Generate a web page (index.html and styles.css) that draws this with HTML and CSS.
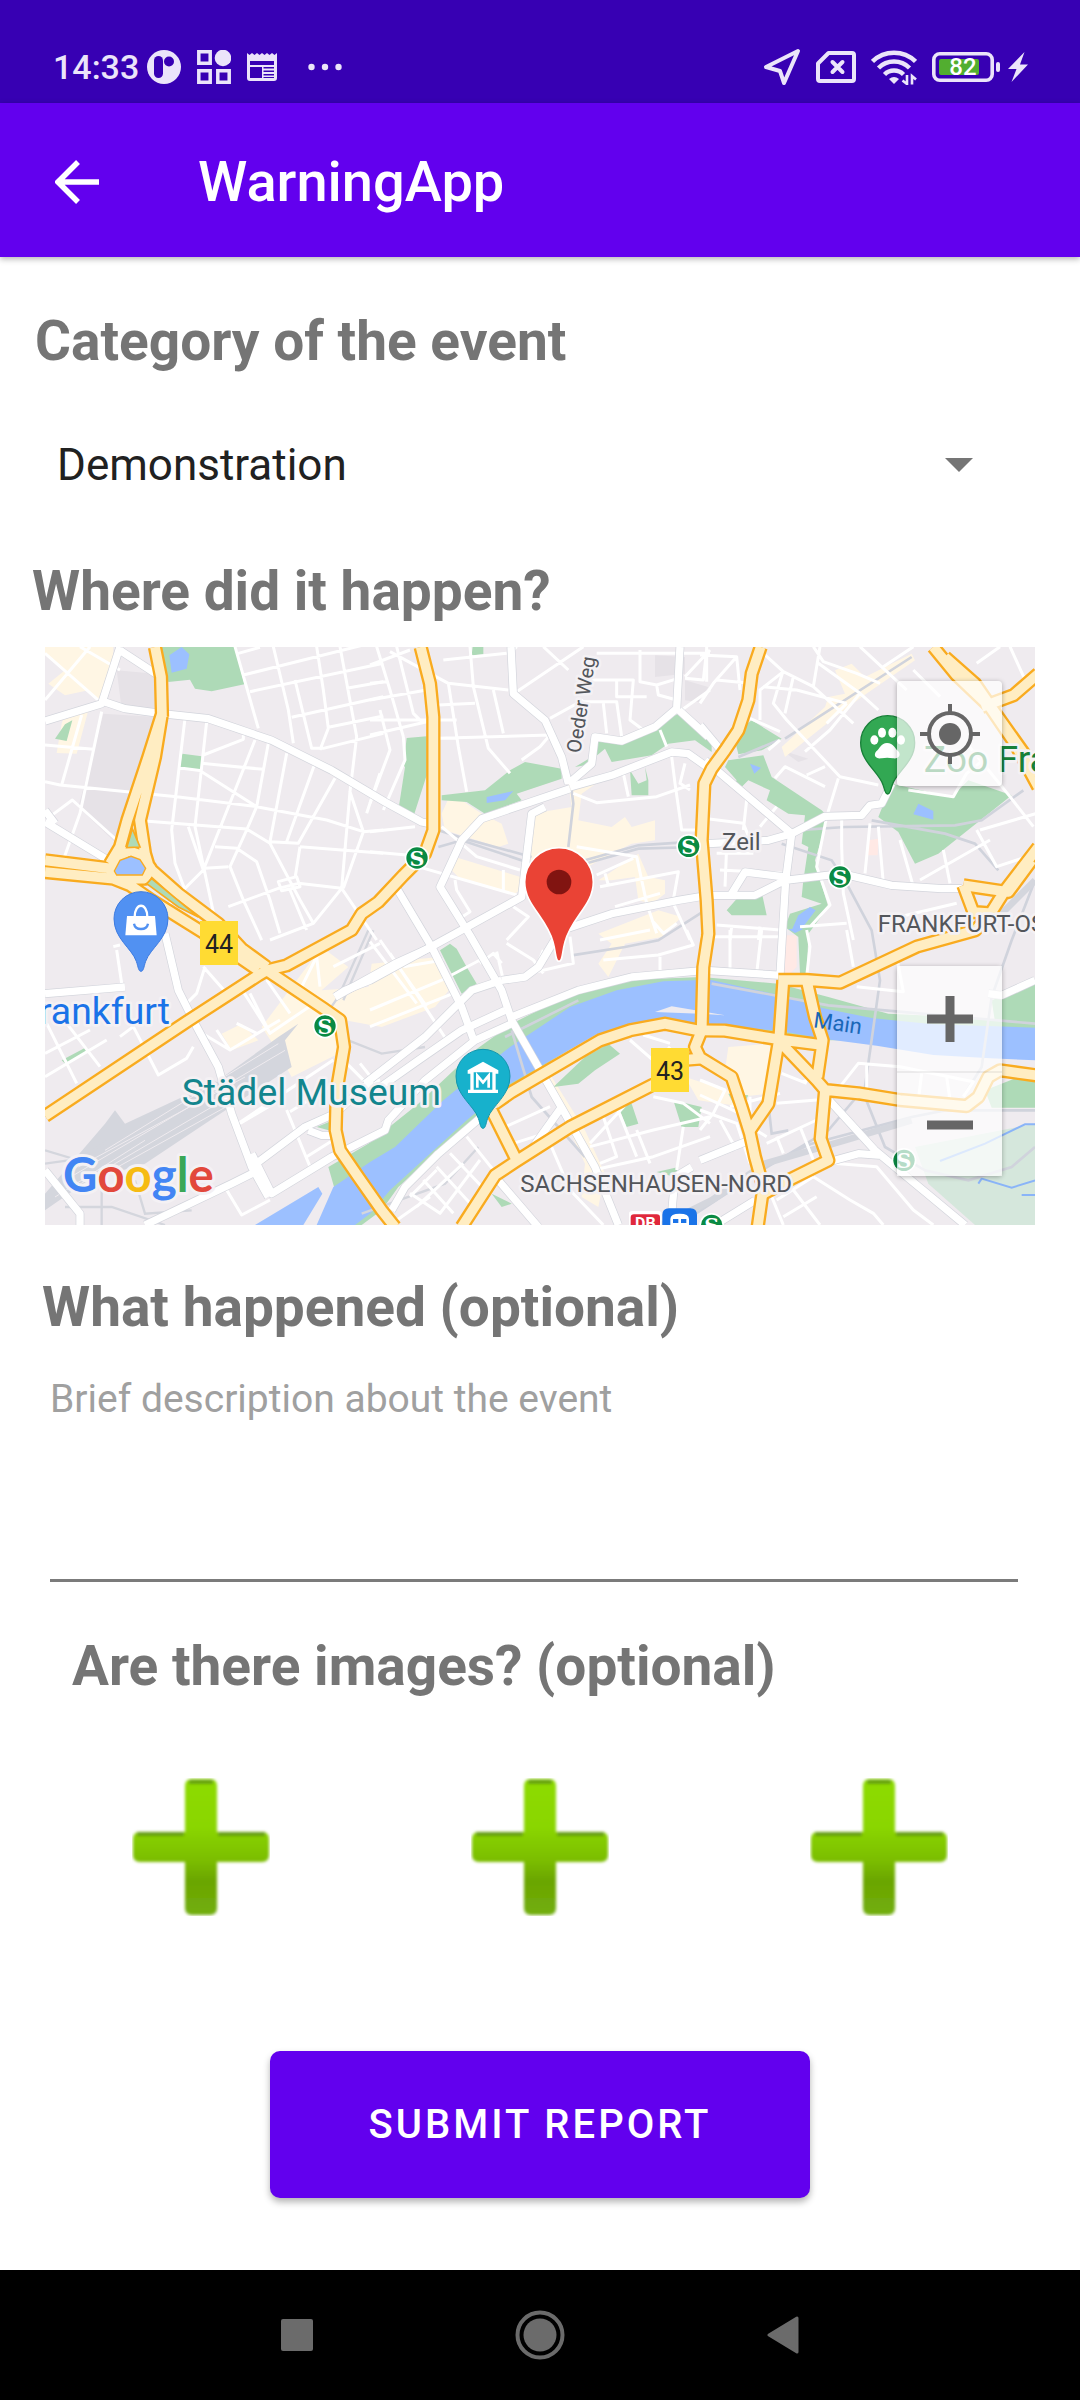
FILE: index.html
```html
<!DOCTYPE html>
<html lang="en">
<head>
<meta charset="utf-8">
<meta name="viewport" content="width=device-width, initial-scale=1">
<title>WarningApp</title>
<link rel="stylesheet" href="styles.css">
</head>
<body>
<div class="status-bar">
  <div class="status-group">
    <span class="clock">14:33</span>
    <svg class="ic-app" width="34" height="34" viewBox="0 0 34 34"><circle cx="17" cy="17" r="17" fill="#ebe4fa"/><rect x="7" y="6" width="9" height="22" rx="4.500" fill="#3700b3"/><circle cx="22" cy="11.500" r="5" fill="#3700b3"/></svg>
    <svg width="34" height="34" viewBox="0 0 34 34"><g fill="none" stroke="#ebe4fa" stroke-width="3.500"><path d="M1.800 1.800h11.400v11.400H1.800zM1.800 20.800h11.400v11.400H1.800zM20.800 20.800h11.400v11.400H20.800z"/></g><circle cx="26" cy="8" r="8.300" fill="#ebe4fa"/></svg>
    <svg width="30" height="28" viewBox="0 0 30 28"><path fill="#ebe4fa" fill-rule="evenodd" d="M0 0l2.500 2L5 0l2.500 2L10 0l2.500 2L15 0l2.500 2L20 0l2.500 2L25 0l2.500 2L30 0v25a3 3 0 0 1-3 3H3a3 3 0 0 1-3-3zM3 8v4h24V8zM3 14v11h12V14zM16.500 14v1.500H27V14zm0 3.500V19H27v-1.500zm0 3.500v1.500H27V21zm0 3v1H27v-1z"/></svg>
    <svg class="ic-more" width="34" height="8" viewBox="0 0 34 8"><g fill="#ebe4fa"><circle cx="3.500" cy="4" r="3.200"/><circle cx="17" cy="4" r="3.200"/><circle cx="30.500" cy="4" r="3.200"/></g></svg>
  </div>
  <div class="status-group status-right">
    <svg width="38" height="38" viewBox="0 0 38 38"><path d="M35 3L3 19l14 4 4 12z" fill="none" stroke="#ebe4fa" stroke-width="4" stroke-linejoin="round"/></svg>
    <svg width="40" height="32" viewBox="0 0 40 32"><path d="M12.500 2H36a2 2 0 0 1 2 2v24a2 2 0 0 1-2 2H4a2 2 0 0 1-2-2V12.500z" fill="none" stroke="#ebe4fa" stroke-width="4" stroke-linejoin="round"/><path d="M16.500 11l10 10m0-10l-10 10" stroke="#ebe4fa" stroke-width="4" stroke-linecap="round"/></svg>
    <svg width="46" height="36" viewBox="0 0 46 36"><g fill="none" stroke="#ebe4fa" stroke-width="4.500"><path d="M1.500 12.500a31 31 0 0 1 43 0"/><path d="M7.500 19a22 22 0 0 1 31 0"/><path d="M13.500 25.500a13.500 13.500 0 0 1 19 0"/></g><path d="M18 30q5-4 10 0l-5 5z" fill="#ebe4fa"/><path d="M36 26v9l-4.500-3.500M41 35.500V27l4 3.500" fill="none" stroke="#ebe4fa" stroke-width="2.600"/></svg>
    <svg width="68" height="30" viewBox="0 0 68 30"><rect x="1.800" y="1.800" width="58.400" height="26.400" rx="6" fill="none" stroke="#ebe4fa" stroke-width="3.600"/><rect x="7" y="7" width="40" height="16" rx="2" fill="#52ae30"/><rect x="64" y="10" width="4" height="10" rx="2" fill="#ebe4fa"/><text x="31" y="23" class="battery-text">82</text></svg>
    <svg class="ic-bolt" width="20" height="30" viewBox="0 0 20 30"><path d="M16.500 0L0 17h8.500L3.500 30 20 12.500h-8z" fill="#ebe4fa"/></svg>
  </div>
</div>

<header class="app-bar">
  <button class="back" type="button" aria-label="Back"><svg width="44" height="44" viewBox="0 0 44 44"><path d="M44 22H4M23 2L3 22l20 20" fill="none" stroke="#fff" stroke-width="5.500"/></svg></button>
  <h1>WarningApp</h1>
</header>

<main>
  <form class="report">
    <label class="heading heading-category" for="category">Category of the event</label>
    <div class="spinner">
      <select id="category"><option>Demonstration</option></select>
      <svg class="caret" width="28" height="14" viewBox="0 0 28 14"><path d="M0 0h28L14 14z" fill="#757575"/></svg>
    </div>

    <h2 class="heading">Where did it happen?</h2>
    <div class="map">
      <svg class="map-canvas" viewBox="0 0 2970 1734" preserveAspectRatio="xMidYMid slice" role="img" aria-label="Map of Frankfurt">
        <defs>
          <g id="streets">
            <g transform="translate(-15 -21)">
              <path d="M15 40L180 185M15 180L150 20M120 20L240 90M185 215L120 520L70 660M125 225L65 435M15 315L160 328M15 425L60 435L410 470L650 500L860 540L970 575L1030 570M30 530L97 480L230 600M435 235L395 570L405 670L435 750M500 245L465 560L495 700L525 840M490 345L610 298V285M485 370L670 388M485 395L650 500L620 570L570 680L610 780L665 900M415 383L485 392M315 543L620 567L690 610L780 780L820 850M645 300L490 690L390 790M685 310L650 500M740 340L690 605L775 610L885 415M825 370L740 605M930 455L905 745L820 850L690 900M780 620L1030 640M525 620L590 625L650 665L690 780L720 880M495 685L565 680M445 560L490 690M565 800L715 745L775 730L905 745L1010 900M715 725L770 710L780 740L725 752ZM780 620L765 715M750 750L800 870M585 20L655 265M595 40L660 22M610 105L1030 0M630 155L1030 70M700 20L745 210L760 310M765 120L815 325H850L1030 280M755 232L1030 170M830 20L850 150L865 265L840 330M865 262L1030 228M900 20L950 290L930 455L970 575L910 745M920 145L1030 125M1020 400L980 520"/>
            </g>
            <g transform="translate(975 -21)">
              <path d="M0 75L120 30M0 130L50 125M0 240L260 240M0 180L170 150M0 285L170 245M20 20L60 150L100 290M80 20L130 220L160 250M30 210L60 330L0 490M100 290L105 360L40 510M60 35L235 130L415 150M220 60L410 40M300 20L310 140L355 325L420 400M235 130L265 320L290 455M205 195L315 190M205 295L540 285L510 320L455 360M370 150L400 280M420 40L440 20M440 155L640 20M520 20L595 90M540 235L640 180M640 120L790 120L780 240L820 270M740 120V170H830M640 185H740L755 290M700 190L710 280M680 40L1020 40M810 30V125L860 135L925 115M860 135L865 165L920 180M945 115L1000 120L1010 30M945 110L1020 30M870 270L890 320M935 210L1020 150M760 400L775 470M610 460L680 488L860 470L960 435M905 350L915 430L935 570H980M945 370L930 430L960 450M0 575L135 560M0 635L110 645M110 670L440 765M215 560L320 650L450 690M400 690V750M255 720L260 750L300 815L270 835M430 800L475 830L410 900M620 620L800 650L830 790L860 880M680 705L790 655M690 740L925 695L910 780M735 800L870 760M705 700L715 735M910 790L960 900M845 840L880 880L920 850"/>
            </g>
            <g transform="translate(1965 -21)">
              <path d="M0 45L110 50L40 130L0 190M20 20V125M50 120L150 130M110 50L120 150M190 40L250 95L340 140L360 20M250 95L180 150V240M150 235L240 275M250 90L220 190L260 240L420 410L535 435M190 140L290 150L440 190M280 110L255 220M340 140L460 250M355 70L480 160L535 210M340 20L370 65L470 100L540 130M480 20L550 85L620 150M550 80L640 20M480 160L390 270L315 335M440 190L380 250M205 330L240 300M225 415L255 380L375 440M320 405L375 380M415 415L380 530L350 680L390 795L330 860M230 500L180 560M140 480L130 570M10 535L130 550L150 600M50 640L160 640M60 690L250 700M80 620L75 740M425 540V620L430 760L460 900M510 550L495 700M535 560L550 730M600 600L640 740M625 450L760 470L800 400L850 360M840 570L1010 520M830 570L890 680L1010 640M730 630L750 730M660 720L870 600M300 860L440 850M95 860L90 900M180 860L175 900M50 855L240 870M640 90L720 170M830 70L900 20M930 20L980 130M800 310L930 470L1000 560M0 890L90 890L240 890M600 830L770 790"/>
            </g>
            <g transform="translate(-15 849)">
              <path d="M15 440L200 330M15 370L150 300M20 280L110 460M80 280L180 410M230 60L245 160M220 50L240 45M490 110L560 190M495 110L470 190L430 230M470 300L570 360L720 270M530 300L570 360M240 320L280 290L355 435L440 385L460 350M590 280L650 310M630 190L690 310L830 215M680 150L750 250M600 170L690 310M830 80L840 170M780 180L830 80L900 20M1020 40L880 110M580 590L880 390M600 580L720 510M740 540L810 710M750 545L870 470M800 680L880 630M560 780L605 855L690 810M900 380L980 460L1020 450M960 400L1000 450"/>
            </g>
            <g transform="translate(975 849)">
              <path d="M0 35L140 220M30 30L170 230M60 70L230 330M0 240L240 140M0 290L250 190M100 110L220 90M245 135L330 90M380 65L400 150M410 40L490 90L520 130M500 125L610 100L600 20M395 100L370 70L330 100M520 60L500 110M690 30L840 0M700 90L865 75M865 75L970 45L950 0M870 80V120M120 790L210 850L330 690M140 830L280 700M160 750L250 850M200 710L300 820M240 670L345 780M290 620L370 720M180 800L60 885M385 600L540 530M430 640L590 590M540 640L600 780L700 885M660 640L780 510L850 440M660 650L850 600L1020 560M700 560L740 680L690 700M740 530L800 680M670 720L850 680L1020 620M850 500L940 520L1020 580M940 590L920 720M800 600L840 700M780 330L860 400L900 350M820 315L900 340M120 800L200 720"/>
            </g>
            <g transform="translate(1965 849)">
              <path d="M90 0V130M185 0L170 130M440 0L460 110M470 170L610 185L590 80M320 0L330 50L320 140M0 450L75 480L40 550L0 600M0 495L140 560M90 530L240 490M0 540L110 580L150 700M60 570L110 660M230 520L350 510M245 430L320 460M310 455L350 440M420 470L475 400L600 410L820 455L790 500M500 400V480M665 430L655 510M740 440L750 510M350 570L200 640M300 590L340 690M230 620L250 670M340 740L450 810L520 850L550 885M400 700L530 710L640 840L700 885M215 800L250 885M230 810L340 740M280 780L360 885M250 860L350 800M150 500V590L200 620"/>
            </g>
          </g>
          <g id="avenues">
            <path d="M0 222L170 170L215 30L225 0M180 165L240 185L350 200L490 215L680 280L860 370L1020 465L1130 525L1155 530"/>
            <path d="M225 10L340 85M0 525L190 640M0 490L30 530"/>
            <path d="M1398 0L1405 140L1500 220L1550 330L1570 410M1570 410L1640 350L1650 270L1730 282L1830 240L1895 185L1905 0"/>
            <path d="M1575 420L1700 385L1880 315L1930 320L2000 370M1575 425L1310 515L1250 580L1185 720L1275 865L1370 1030L1400 1120L1560 1400L1650 1560L1720 1734"/>
            <path d="M1500 480L1460 500L1430 750L1230 860L975 1000L900 1030L870 1050"/>
            <path d="M1902 190L1990 270M1965 235L2040 325M1980 340L2110 450L2240 560L2340 508L2450 505L2475 475L2510 470L2540 410"/>
            <path d="M1550 850L1700 800L1900 760L1990 745L2130 745L2220 700L2390 680L2540 715L2690 725H2750M2240 560L2222 700L2205 985M2220 690L2100 675L2060 740M2240 560L2170 580L1990 590"/>
            <path d="M1050 715L1160 900L1250 1080L1290 1190M1160 900L1050 950L870 1050"/>
            <path d="M1370 1000L1440 990L1480 960L1540 860M1370 1000L1280 1030L1140 1170L960 1310M1380 1090L1250 1150L1120 1240L950 1360M1400 1130L1290 1180L1140 1300L1030 1420L1020 1450L860 1530L680 1640L620 1520M1400 1110L1600 1030L1760 990L1980 970L2210 985"/>
            <path d="M0 1040L240 1020M360 860L400 1030L450 1130L520 1260L560 1400L620 1560L670 1650M620 1560L780 1440L870 1400L980 1300M790 1450L830 1465H870M620 1580L560 1610L300 1734M0 1570L105 1700V1734M1320 1400L1180 1520L1080 1620L1040 1690M1450 1520L1550 1380M1360 1600L1480 1740M1940 1560L1890 1590L1880 1700"/>
            <path d="M1965 1540L2100 1485M2330 1335L2490 1510L2760 1734M2350 1545L2440 1520L2510 1525M2830 1040L2870 1045L2970 1000M2000 1740L2130 1660"/>
          </g>
          <g id="highways">
            <path d="M330 0L348 90L351 210M351 200L310 330L247 520L225 600L195 650M351 200L330 330L285 520L300 620L315 670M200 675L210 635L250 612L290 625L318 665L298 695L205 695ZM0 640L200 665M0 675L205 695L255 715L320 760L480 860L640 970M310 660L400 740L520 830L590 905L665 960"/>
            <path d="M0 1407L425 1124L640 985L665 970L725 955L920 849L950 800L1000 765L1075 685L1140 620L1165 550V450V210L1155 110L1127 0M665 970L835 1084L885 1119L897 1200L875 1330L872 1450L885 1510L940 1590L1010 1690L1050 1740"/>
            <path d="M2147 0L2120 80L2110 160L2080 250L2040 310L2000 365L1978 410L1970 580L1985 760L1990 860L1975 960L1970 1150L1950 1200L1965 1232L2060 1290L2090 1380L2115 1460L2130 1530L2155 1620L2138 1740"/>
            <path d="M1970 1150L2040 1151L2200 1177L2330 1194M2202 1185L2215 1000M2200 999L2285 999L2385 1007L2615 899L2790 850L2830 810L2880 730L2980 600M2285 1000L2310 1110L2333 1180L2317 1290M2205 1185L2315 1300L2340 1329L2440 1339L2565 1359L2765 1377L2800 1350L2830 1290L2865 1270L2980 1286M2340 1330L2327 1475L2350 1540L2240 1595L2155 1640M2200 1190L2170 1370L2115 1450M2755 715L2890 735L2960 640M2755 715L2785 795L2850 800"/>
            <path d="M1350 1370L1400 1335L1665 1180L1755 1150L1860 1130L1965 1151M1340 1390L1410 1530M1250 1740L1350 1585L1410 1545L1575 1440L1830 1310L1900 1240L1965 1235"/>
            <path d="M2665 0L2735 85L2835 180L2910 290L2980 420M2700 30L2790 110L2845 190L2980 380M2810 180L2905 145L2980 80"/>
          </g>
          <g id="station"><circle r="37" fill="#fff"/><circle r="32" fill="#0a8a43"/><text y="23" class="station-s">S</text></g>
        </defs>

        <rect width="2970" height="1734" fill="#efebef"/>
        <!-- grey blocks -->
        <path fill="#e6e2e7" d="M215 70L330 80L335 200L230 185ZM175 200L335 210L240 580L215 590L100 480Z M1830 25L1920 30V80L1830 90ZM1920 100L1990 120L1960 165L1920 160ZM2210 310L2290 335L2260 345Z"/>
        <!-- commercial areas -->
        <path fill="#fff6e4" d="M0 0H205V70L160 160L130 130L60 145L10 110L60 70L0 20ZM60 200L130 190L95 320L35 318L50 230ZM1210 455L1250 460L1310 500L1370 530L1390 590L1360 600L1200 550L1190 500ZM1230 630L1460 700L1410 740L1240 690L1210 660ZM1490 495L1580 480L1570 410L1660 405L1610 440L1600 520L1700 540L1740 510L1760 540L1830 520V580L1760 590L1700 620L1590 680L1450 640L1460 510ZM1660 700L1780 620L1810 690L1860 700V740L1820 770L1780 760L1770 690L1700 700ZM1660 860L1840 790L1910 810L1850 870L1740 890L1690 990L1660 950L1700 890ZM650 1140L830 900L910 960L830 1030L970 1020L980 950L1180 930L1220 1020L1170 1080L1010 1140L900 1120L880 1220L740 1290L690 1200ZM530 1160L590 1130L640 1180L560 1210ZM2370 70L2420 50L2460 90L2600 20L2610 40L2450 150L2370 210L2220 330L2210 300L2340 180L2350 150L2400 140ZM2050 1200L2180 1190L2170 1340L2080 1350L2040 1270ZM1920 1290L2080 1340L2100 1380L1960 1360ZM1470 1270L1520 1290L1620 1450L1680 1580L1660 1680L1610 1650L1620 1550L1560 1420Z"/>
        <path fill="#ffe9e5" d="M2470 580L2500 575L2498 625L2465 625ZM2220 865H2255V960L2215 1000Z"/>
        <!-- parks -->
        <path fill="#aedab7" d="M345 0H570L598 112L500 133L450 125L435 98L370 105ZM30 275L60 232L82 220L65 282ZM412 320L470 328L468 368L404 362ZM1283 0H1315V22L1280 25ZM1085 273L1145 268V385L1105 510L1060 490L1080 360L1075 355ZM1190 445L1320 430L1395 370L1440 345L1550 365V395L1415 440L1430 460L1320 500L1265 465L1190 460ZM1590 360L1640 330L1650 270L1730 285L1900 200L1950 220L2000 290V315L1950 280L1870 290L1820 325L1700 345L1680 305L1650 330L1645 350ZM1755 370L1780 410L1805 400L1800 360L1810 400V445H1760Z"/>
        <path fill="#aedab7" d="M2065 260L2120 220L2210 275L2150 310L2080 322ZM2050 340L2155 325L2180 390L2330 490L2350 510L2310 640L2320 680L2350 780L2290 860L2285 1000L2265 980L2260 870L2220 840L2235 800L2330 770L2270 750L2275 700L2290 600L2270 590L2280 505L2230 500L2165 460L2175 430L2110 400L2080 430L2060 420L2075 400L2040 360ZM2540 410L2720 450L2770 400L2900 445L2680 620L2610 650L2560 555L2500 510ZM2045 790L2080 750L2150 735L2165 805H2060ZM2840 1060L2970 1010V1140L2850 1125ZM2820 1330L2970 1270V1382H2840Z"/>
        <path fill="#aedab7" d="M1185 910L1215 890L1235 905L1265 960L1295 1010L1250 1040ZM50 1240L125 1200L130 1210L65 1255ZM815 1440L865 1420L870 1455ZM1720 1380L1760 1370L1780 1430L1745 1440ZM1885 1360L1970 1380L1960 1440L1910 1440ZM1835 1575L1900 1560L1890 1590ZM1340 1640L1400 1670L1370 1680ZM2050 1340L2110 1345L2080 1400ZM1525 1320L1620 1230L1690 1190L1725 1220L1650 1270L1600 1310Z"/>
        <path fill="#d5e7dc" d="M2610 1500L2970 1430V1734H2790L2650 1610Z"/>
        <path fill="#aedab7" d="M850 1560L970 1490L1120 1370L1290 1210L1400 1130L1580 1040L1720 1000L1970 990L2200 1010L2350 1050L2530 1100L2740 1110L2970 1130V1180L2300 1180L1965 1140L1850 1110L1650 1160L1390 1320L1060 1620L1010 1690L950 1734H900Z"/>
        <!-- river and ponds -->
        <path fill="#9cc0ff" d="M630 1734L820 1620L832 1640L775 1734ZM815 1734L865 1620L975 1545L1050 1500L1195 1360L1280 1290L1395 1200L1575 1080L1715 1030L1855 1003L1995 998L2205 1045L2335 1084L2485 1114L2665 1132L2970 1142V1240L2835 1234L2665 1224L2495 1196L2335 1175L2195 1150L1965 1135L1860 1116L1755 1138L1655 1162L1395 1310L1265 1420L1035 1630L975 1700L930 1734Z"/>
        <path fill="#eeebf0" d="M1830 1095L1880 1078L2040 1105L1965 1100Z"/>
        <path fill="#9cc0ff" d="M373 25L410 0L433 22L425 65L380 77ZM210 660L260 632L290 665L285 678ZM1325 450L1405 432L1380 460L1325 468ZM2115 350L2148 362L2128 380ZM2620 470L2665 492V518L2605 502ZM2240 850L2260 805L2295 780L2312 790L2270 845ZM2230 846H2275L2250 858Z"/>
        <path fill="none" stroke="#8ab4f8" stroke-width="6" d="M2685 1542L2820 1490L2940 1432H2970M2800 1610L2810 1595L2900 1622L2970 1600M2930 1644H2970"/>

        <!-- railways -->
        <path fill="#d4d6dd" d="M0 1640L180 1430L210 1390L240 1430L520 1300L700 1170L760 1130L720 1180L740 1260L480 1430L300 1550L130 1600L0 1690Z"/>
        <path fill="none" stroke="#efebef" stroke-width="3" d="M60 1600L720 1210M90 1620L620 1310M180 1510L700 1190M100 1560L600 1290M200 1570L560 1370M30 1650L300 1480"/>
        <path fill="none" stroke="#d4d6dd" stroke-width="7" d="M0 1510L100 1540L190 1480M0 1550L70 1540M60 1680L200 1680L360 1734M170 1600V1734M270 1600L300 1700L440 1690M970 850L880 1050L830 1120M985 850L895 1060M910 1180L1010 1220L1140 1200M950 1700L1200 1610L1300 1500"/>
        <path fill="none" stroke="#d0d3dc" stroke-width="8" d="M1180 550L1260 575L1460 630M1180 600L1250 580L1460 650M1620 640L1780 595L1960 583M1620 650L1780 605L1960 600M1580 430L1585 470L1570 600M1580 925L1740 900L1840 880L1980 790M1400 1150L1460 1350L1620 1530M1380 1170L1600 1060M2000 1010L2350 1075L2970 1130M2220 275L2600 30M2210 590L2360 640L2400 700L2480 850L2505 1000L2460 1320L2350 1450L2150 1570L1900 1734M2250 550L2400 540L2730 535L2810 520L2935 430M2480 520L2700 560L2790 590L2860 670M2080 330L2200 280M2460 1350L2520 1500L2640 1570L2770 1600L2900 1560L2970 1500M2970 700L2900 880L2840 1050L2810 1260L2760 1340M2150 1560L2300 1490L2600 1410L2700 1390L2970 1390M2170 1370L2180 1460L2230 1450"/>
        <path fill="none" stroke="#d4d6dd" stroke-width="20" d="M1850 1734L2000 1660L2160 1550L2400 1480L2600 1420M2870 800L2970 700"/>

        <use href="#streets" class="street"/>
        <use href="#avenues" class="avenue-edge"/>
        <use href="#avenues" class="avenue"/>
        <use href="#highways" class="highway-edge"/>
        <use href="#highways" class="highway"/>
        <path fill="#9cc0ff" stroke="#f9ab1f" stroke-width="4" d="M208 672L225 640L258 628L285 638L302 664L292 684H215Z"/>
        <path fill="#aedab7" stroke="#f9ab1f" stroke-width="5" d="M262 545L285 600L245 602ZM320 695L460 810L400 780L305 710Z"/>

        <!-- route shields -->
        <path fill="#ffdb33" d="M465 822H579V954H465ZM1818 1203H1932V1335H1818Z"/>
        <text x="522" y="917" class="shield">44</text>
        <text x="1875" y="1298" class="shield">43</text>

        <!-- stations -->
        <use href="#station" x="1116" y="633"/>
        <use href="#station" x="1931" y="598"/>
        <use href="#station" x="2385" y="690"/>
        <use href="#station" x="840" y="1137"/>
        <use href="#station" x="2577" y="1540"/>
        <use href="#station" x="2000" y="1735"/>
        <path fill="#fff" d="M1752 1700Q1752 1692 1762 1692H1840Q1850 1692 1850 1700V1734H1752Z"/>
        <path fill="#e0283c" d="M1757 1712Q1757 1702 1767 1702H1835Q1845 1702 1845 1712V1734H1757Z"/>
        <text x="1801" y="1746" class="db">DB</text>
        <path fill="#1a73e8" d="M1852 1704Q1852 1684 1872 1684H1936Q1956 1684 1956 1704V1734H1852Z"/>
        <path fill="#fff" fill-rule="evenodd" d="M1876 1734V1716Q1876 1700 1904 1700Q1932 1700 1932 1716V1734ZM1884 1716V1728H1900V1716ZM1908 1716V1728H1924V1716Z"/>

        <!-- place labels -->
        <text x="375" y="1131" class="label poi poi-blue end">Frankfurt</text>
        <text x="410" y="1375" class="label poi poi-teal">Städel Museum</text>
        <text x="2636" y="374" class="label poi poi-green">Zoo Frankfurt</text>
        <text x="2498" y="856" class="label area">FRANKFURT-OST</text>
        <text x="1426" y="1636" class="label area">SACHSENHAUSEN-NORD</text>
        <text x="2031" y="609" class="label area">Zeil</text>
        <text transform="translate(1606 320) rotate(-81)" class="label street-name">Oeder Weg</text>
        <text transform="translate(2303 1141) rotate(8)" class="river-name">Main</text>

        <!-- place pins -->
        <g transform="translate(288 815)">
          <path fill="#5191f2" stroke="#3d7be0" stroke-width="3" d="M0 158C-8 158-8 145-14 128C-28 88-81 60-81 0A81 81 0 0 1 81 0C81 60 28 88 14 128C8 145 8 158 0 158Z"/>
          <path fill="#fff" d="M-42-8H42L47 50H-47Z"/><path fill="none" stroke="#fff" stroke-width="7" d="M-19-5C-19-50 19-50 19-5"/><path fill="none" stroke="#5191f2" stroke-width="7" d="M-21 15Q-18 31 0 31Q18 31 21 15"/>
        </g>
        <g transform="translate(1314 1288)">
          <path fill="#17b1cc" stroke="#1296ad" stroke-width="3" d="M0 156C-8 156-8 143-14 126C-28 86-81 58-81 0A81 81 0 0 1 81 0C81 58 28 86 14 126C8 143 8 156 0 156Z"/>
          <path fill="#fff" fill-rule="evenodd" d="M0-44L46-18V-8H38V40H45V50H-45V40H-38V-8H-46V-18ZM-28-12V40H28V-12Z"/><path fill="none" stroke="#fff" stroke-width="8" d="M-17 34V-2L0 18L17-2V34"/>
        </g>
        <g transform="translate(2528 287)">
          <path fill="#32a853" stroke="#188038" stroke-width="4" d="M0 154C-8 154-8 143-14 126C-28 86-81 58-81 0A81 81 0 0 1 81 0C81 58 28 86 14 126C8 143 8 154 0 154Z"/>
          <g fill="#fff"><ellipse cx="-17" cy="-30" rx="12" ry="15"/><ellipse cx="14" cy="-30" rx="12" ry="15"/><ellipse cx="-40" cy="-8" rx="12" ry="14"/><ellipse cx="40" cy="-8" rx="12" ry="14"/><path d="M-2 1C18 1 22 18 32 26C42 38 32 50 16 47Q-2 43-18 47C-36 50-44 38-34 26C-24 18-20 1-2 1Z"/></g>
        </g>
        <!-- selected location -->
        <g transform="translate(1542 705)">
          <path fill="#ea4335" stroke="#fff" stroke-width="5" d="M0 238C-12 238-8 215-18 180C-38 105-103 70-103 0A103 103 0 0 1 103 0C103 70 38 105 18 180C8 215 12 238 0 238Z"/><circle r="37" fill="#811411"/>
        </g>
        <text x="54" y="1634" class="logo"><tspan fill="#4285f4">G</tspan><tspan fill="#e2483b">o</tspan><tspan fill="#f6bb13">o</tspan><tspan fill="#4285f4">g</tspan><tspan fill="#3aa757">l</tspan><tspan fill="#e2483b">e</tspan></text>
      </svg>
      <button class="map-button locate" type="button" aria-label="My location"><svg width="60" height="60" viewBox="0 0 60 60"><circle cx="30" cy="30" r="21" fill="none" stroke="#666" stroke-width="4"/><circle cx="30" cy="30" r="11" fill="#666"/><path d="M30 0v9M30 51v9M0 30h9M51 30h9" stroke="#666" stroke-width="4"/></svg></button>
      <div class="zoom">
        <button class="map-button" type="button" aria-label="Zoom in"><svg width="46" height="46" viewBox="0 0 46 46"><path d="M23 0v46M0 23h46" stroke="#666" stroke-width="9"/></svg></button>
        <button class="map-button" type="button" aria-label="Zoom out"><svg width="46" height="46" viewBox="0 0 46 46"><path d="M0 23h46" stroke="#666" stroke-width="9"/></svg></button>
      </div>
    </div>

    <label class="heading heading-description" for="description">What happened (optional)</label>
    <textarea id="description" placeholder="Brief description about the event"></textarea>

    <h2 class="heading heading-images">Are there images? (optional)</h2>
    <svg width="0" height="0" class="defs" aria-hidden="true"><defs>
      <linearGradient id="green" x1="0" y1="0" x2="0" y2="1"><stop offset="0" stop-color="#8ddb00"/><stop offset=".35" stop-color="#8ad600"/><stop offset=".6" stop-color="#7bbd03"/><stop offset=".75" stop-color="#6aa500"/><stop offset="1" stop-color="#72ae0c"/></linearGradient>
      <filter id="soft" x="-5%" y="-5%" width="110%" height="110%"><feGaussianBlur stdDeviation="1.500"/></filter>
      <g id="plus" filter="url(#soft)"><path fill="url(#green)" d="M60 1h18q7 0 7 7v46h45q7 0 7 7v16q0 7-7 7H85v46q0 7-7 7H60q-7 0-7-7V84H8q-7 0-7-7V61q0-7 7-7h45V8q0-7 7-7z"/><path fill="none" stroke="#649b0c" stroke-width="4" d="M57 4h24M5 56h47M86 56h47"/></g>
    </defs></svg>
    <div class="images">
      <button type="button" aria-label="Add first image"><svg width="138" height="138" viewBox="0 0 138 138"><use href="#plus"/></svg></button>
      <button type="button" aria-label="Add second image"><svg width="138" height="138" viewBox="0 0 138 138"><use href="#plus"/></svg></button>
      <button type="button" aria-label="Add third image"><svg width="138" height="138" viewBox="0 0 138 138"><use href="#plus"/></svg></button>
    </div>
    <button class="submit" type="submit">SUBMIT REPORT</button>
  </form>
</main>

<nav class="nav-bar">
  <button type="button" aria-label="Recent apps"><svg width="32" height="32" viewBox="0 0 32 32"><rect width="32" height="32" rx="2" fill="#6b6b6b"/></svg></button>
  <button type="button" aria-label="Home"><svg width="50" height="50" viewBox="0 0 50 50"><circle cx="25" cy="25" r="22.500" fill="none" stroke="#6b6b6b" stroke-width="4"/><circle cx="25" cy="25" r="16.500" fill="#6b6b6b"/></svg></button>
  <button type="button" aria-label="Back"><svg width="32" height="38" viewBox="0 0 32 38"><path d="M30 2v34L2 19z" fill="#6b6b6b" stroke="#6b6b6b" stroke-width="3" stroke-linejoin="round"/></svg></button>
</nav>
</body>
</html>
```
FILE: styles.css
```css
* { box-sizing: border-box; }

body {
  margin: 0;
  min-height: 100vh;
  display: flex;
  flex-direction: column;
  background: #fff;
  font-family: Roboto, "Liberation Sans", sans-serif;
}

button {
  margin: 0;
  padding: 0;
  border: 0;
  background: none;
  font: inherit;
}

svg { display: block; flex: none; }

/* status bar */
.status-bar {
  height: 103px;
  padding: 30px 52px 0 53px;
  display: flex;
  justify-content: space-between;
  align-items: center;
  background: #3700b3;
}
.status-group { display: flex; align-items: center; gap: 16px; }
.status-right { gap: 15px; }
.clock { font-size: 34px; line-height: 40px; font-weight: 500; color: #ebe4fa; }
.ic-app { margin-left: -8px; }
.ic-more { margin-left: 15px; }
.ic-bolt { margin-left: -7px; }
.battery-text { font: 500 24px Roboto, sans-serif; fill: #fff; text-anchor: middle; }

/* app bar */
.app-bar {
  height: 154px;
  padding: 4px 55px 0;
  display: flex;
  align-items: center;
  gap: 99px;
  background: #6200ee;
  box-shadow: 0 2px 6px rgba(0, 0, 0, .3);
}
.app-bar h1 { margin: 0; font-size: 56px; line-height: 64px; font-weight: 500; color: #fff; }

main { flex: 1; }
.report { padding: 52px 0 72px; display: flex; flex-direction: column; }

.heading {
  margin: 0;
  padding: 0 32px;
  font-size: 55px;
  line-height: 64px;
  font-weight: 700;
  color: #757575;
}
.heading-category { padding: 0 35px; }
.heading-description { margin-top: 50px; padding: 0 42px; }
.heading-images { margin-top: 52px; padding: 0 72px; }

/* category drop-down */
.spinner { margin: 32px 0 34px; display: grid; align-items: center; }
.spinner > * { grid-area: 1 / 1; }
.spinner select {
  width: 100%;
  height: 120px;
  padding: 0 57px;
  border: 0;
  background: none;
  appearance: none;
  font: 400 44px/52px Roboto, "Liberation Sans", sans-serif;
  color: #212121;
}
.caret { justify-self: end; margin-right: 107px; pointer-events: none; }

/* map */
.map { position: relative; margin: 24px 45px 0; height: 578px; overflow: hidden; }
.map-canvas { width: 100%; height: 100%; }
.street { fill: none; stroke: #fff; stroke-width: 9px; stroke-linejoin: round; }
.avenue-edge { fill: none; stroke: #d3d5dc; stroke-width: 26px; stroke-linejoin: round; }
.avenue { fill: none; stroke: #fff; stroke-width: 22px; stroke-linejoin: round; }
.highway-edge { fill: none; stroke: #f9ab1f; stroke-width: 43px; stroke-linejoin: round; }
.highway { fill: none; stroke: #ffedc2; stroke-width: 29px; stroke-linejoin: round; }
.map text { font-family: Roboto, "Liberation Sans", sans-serif; }
.label { paint-order: stroke; stroke: #f4f1f4; stroke-width: 16px; stroke-linejoin: round; }
.poi { font-size: 112px; }
.poi-blue { fill: #1a73e8; }
.poi-teal { fill: #12858d; }
.poi-green { fill: #188038; }
.end { text-anchor: end; }
.area { font-size: 72px; fill: #53565b; }
.street-name { font-size: 60px; fill: #53565b; }
.river-name { font-size: 66px; fill: #1967b8; }
.shield { font-size: 75px; fill: #222; text-anchor: middle; }
.map .station-s { font: 700 62px "DejaVu Serif", serif; fill: #fff; text-anchor: middle; }
.db { font-size: 48px; font-weight: 700; fill: #fff; text-anchor: middle; }
.map .logo { font-family: Lato, sans-serif; font-size: 142px; font-weight: 700; paint-order: stroke; stroke: #f4f1f4; stroke-width: 18px; stroke-linejoin: round; }

.map-button {
  width: 105px;
  height: 105px;
  display: grid;
  place-items: center;
  background: rgba(255, 255, 255, .7);
}
.locate { position: absolute; top: 34px; right: 33px; border-radius: 4px; box-shadow: 0 1px 5px rgba(0, 0, 0, .3); }
.zoom {
  position: absolute;
  right: 33px;
  bottom: 49px;
  border-radius: 4px;
  box-shadow: 0 1px 5px rgba(0, 0, 0, .3);
}
.zoom .map-button + .map-button { border-top: 2px solid rgba(0, 0, 0, .06); }

/* description */
textarea {
  margin: 24px 62px 0 50px;
  padding: 13px 0;
  height: 219px;
  border: 0;
  border-bottom: 3px solid #7b7b7b;
  resize: none;
  background: none;
  font: 400 39px/46px Roboto, "Liberation Sans", sans-serif;
  color: #212121;
}
textarea::placeholder { color: #a0a0a0; opacity: 1; }

/* image slots */
.defs { position: absolute; }
.images {
  margin: 80px 31px 0;
  display: grid;
  grid-template-columns: repeat(3, 1fr);
  justify-items: center;
}

.submit {
  align-self: center;
  margin-top: 135px;
  width: 50%;
  height: 147px;
  border-radius: 10px;
  background: #6200ee;
  box-shadow: 0 4px 7px rgba(0, 0, 0, .3);
  font-size: 40px;
  font-weight: 500;
  letter-spacing: 3px;
  color: #fff;
}

/* system navigation */
.nav-bar {
  height: 130px;
  padding: 0 176px;
  display: grid;
  grid-template-columns: repeat(3, 1fr);
  justify-items: center;
  align-items: center;
  background: #000;
}
```
